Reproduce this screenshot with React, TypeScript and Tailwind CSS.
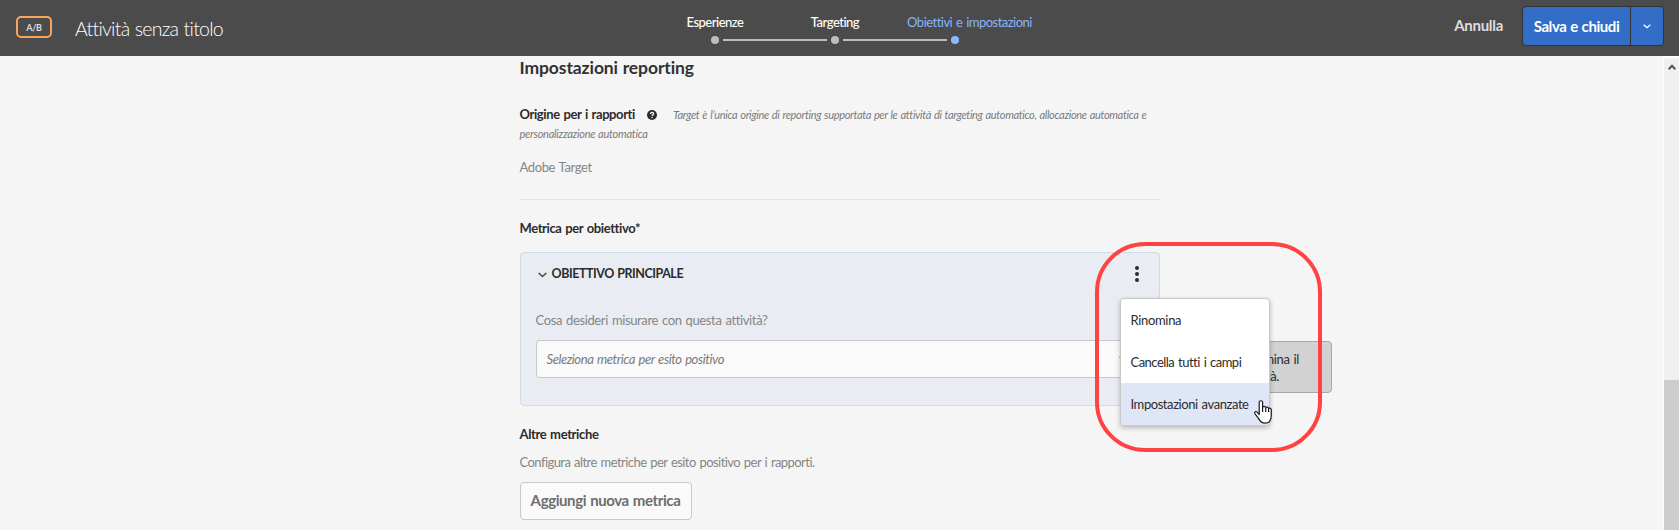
const steps = [
  { label: "Esperienze", active: false, text: "font-medium text-white tracking-[-0.5px]" },
  { label: "Targeting", active: false, text: "font-medium text-white tracking-[-0.5px]" },
  { label: "Obiettivi e impostazioni", active: true, text: "pl-[29px] text-[#86b5fb] tracking-[-0.52px] [word-spacing:1px]" },
];

function Chevron({ className }: { className: string }) {
  return (
    <svg viewBox="0 0 10 6" className={className} fill="none" stroke="currentColor" strokeWidth="1.6" strokeLinecap="round" strokeLinejoin="round">
      <path d="M1.2 1.2 5 4.6 8.8 1.2" />
    </svg>
  );
}

function HelpIcon() {
  return (
    <svg viewBox="0 0 10 10" className="size-[10px] shrink-0">
      <circle cx="5" cy="5" r="5" fill="#2c2c2c" />
      <path d="M3.5 3.9c0-2 3.1-1.9 3.1-.1 0 1.1-1.5 1.1-1.5 2.1" fill="none" stroke="#f5f5f5" strokeWidth="1.3" />
      <circle cx="5.1" cy="7.5" r="0.8" fill="#f5f5f5" />
    </svg>
  );
}

function HandCursor() {
  return (
    <svg viewBox="0 0 18 24" className="absolute left-[133px] top-[101px] h-[24px] w-[18px]" fill="#fff" stroke="#1b1b26" strokeWidth="1.2" strokeLinejoin="round">
      <path d="M5.2 14.6V2.4C5.2.2 8.6.2 8.6 2.4V7.4C8.9 5.8 11.5 5.9 11.7 7.9 12.2 6.5 14.5 6.8 14.6 8.6 15.2 7.7 17.3 8.1 17.3 10V15.2C17.3 20 15 23.2 11 23.2 7.4 23.2 6.2 21.6 4.6 18.6L.9 13.6C.2 11.9 1.8 10.8 3.2 12.1Z" />
      <path d="M8.6 7V12M11.7 8V12M14.6 8.8V12" fill="none" />
    </svg>
  );
}

function Header() {
  return (
    <header className="grid h-14 shrink-0 grid-cols-[655px_360px_1fr] bg-[#4b4b4b]">
      <div className="flex items-start pl-4 pt-4">
        <span className="flex h-[22px] w-9 items-center justify-center rounded-[5px] border-2 border-[#f8a55b] pt-px text-[9px] font-bold tracking-[-0.3px] text-[#dedede]">A/B</span>
        <h1 className="ml-[23px] mt-px text-[19.5px] font-light leading-[24px] tracking-[-0.72px] text-white [word-spacing:0.7px]">Attività senza titolo</h1>
      </div>
      <nav className="grid grid-cols-3 pt-[13px]">
        {steps.map((s, i) => (
          <div key={s.label} className="flex flex-col">
            <div className={`flex justify-center whitespace-nowrap text-[13px] leading-[19px] ${s.text}`}>{s.label}</div>
            <div className="mt-1 grid h-2 grid-cols-[1fr_8px_1fr] items-center gap-1">
              <span className={`h-0.5 ${i > 0 ? "bg-[#bdbdbd]" : ""}`} />
              <span className={`size-2 rounded-full ${s.active ? "bg-[#86b9ff]" : "bg-[#bdbdbd]"}`} />
              <span className={`h-0.5 ${i < 2 ? "bg-[#bdbdbd]" : ""}`} />
            </div>
          </div>
        ))}
      </nav>
      <div className="flex items-start justify-end pr-[15px] pt-1.5">
        <button className="mr-[19px] mt-[9px] text-[15px] font-bold leading-[20px] tracking-[-0.3px] text-[#dedede]">Annulla</button>
        <div className="flex h-10 w-[142px] divide-x divide-[#333] rounded-[4px] border border-[#333] bg-[#326ec8]">
          <button className="w-[108px] text-[15px] font-bold leading-[20px] tracking-[-0.43px] text-white [word-spacing:0.6px]">Salva e chiudi</button>
          <button className="flex flex-1 items-center justify-center pt-px text-white">
            <Chevron className="h-[5px] w-2" />
          </button>
        </div>
      </div>
    </header>
  );
}

function ActionMenu() {
  return (
    <>
      <div className="absolute left-[660px] top-[88px] flex h-[52px] w-[151px] flex-col items-end rounded-[4px] border border-[#a8a8a8] bg-[#d2d2d2] pt-[9px] text-[13px] leading-[17px] tracking-[-0.35px] text-[#2c2c2c]">
        <span className="pr-[32px] [word-spacing:1px]">Elimina il</span>
        <span className="pr-[52px]">attività.</span>
      </div>
      <div className="absolute left-[599px] top-[45px] h-[128px] w-[150px] rounded-[4px] border border-[#c8c8c8] bg-white text-[13px] leading-[42px] text-[#2c2c2c] shadow-[0_2px_5px_rgba(0,0,0,0.25)]">
        <div className="h-[42px] pl-[9.5px] tracking-[-0.33px]">Rinomina</div>
        <div className="h-[42px] pl-[9.5px] tracking-[-0.52px] [word-spacing:1px]">Cancella tutti i campi</div>
        <div className="h-[42px] rounded-b-[3px] bg-[#dfe7f6] pl-[9.5px] tracking-[-0.43px] [word-spacing:1px]">Impostazioni avanzate</div>
        <HandCursor />
      </div>
      <div className="absolute left-[574px] top-[-11px] h-[210px] w-[227px] rounded-[50px] border-4 border-[#ff4343]" />
    </>
  );
}

function GoalPanel() {
  return (
    <section className="relative mt-[14px] h-[154px] rounded-[4px] border border-[#cfdcea] bg-[#e9edf3] px-[15px]">
      <div className="flex h-[42px] items-center pl-[2px]">
        <Chevron className="mt-[2px] h-[6px] w-[9px] text-[#4b4b4b]" />
        <h3 className="ml-[4.5px] text-[12.5px] font-bold tracking-[-0.46px] text-[#2c2c2c] [word-spacing:0.8px]">OBIETTIVO PRINCIPALE</h3>
        <div className="ml-auto mr-[5px] mt-[-1px] flex flex-col gap-[2px]">
          <span className="size-1 rounded-full bg-[#2c2c2c]" />
          <span className="size-1 rounded-full bg-[#2c2c2c]" />
          <span className="size-1 rounded-full bg-[#2c2c2c]" />
        </div>
      </div>
      <p className="-ml-[0.5px] mt-[15px] text-[13px] leading-[20px] tracking-[-0.37px] text-[#858585] [word-spacing:1px]">Cosa desideri misurare con questa attività?</p>
      <div className="mt-[10px] flex h-[38px] items-center justify-between rounded-[4px] border border-[#c8c8c8] bg-[#fafafa] pl-[9.5px] pr-[14px]">
        <span className="pt-[2px] text-[13px] italic tracking-[-0.43px] text-[#7a7a7a] [word-spacing:1px]">Seleziona metrica per esito positivo</span>
        <Chevron className="h-[6px] w-[10px] text-[#707070]" />
      </div>
      <ActionMenu />
    </section>
  );
}

export default function App() {
  return (
    <div className="flex h-[530px] w-full flex-col overflow-hidden bg-[#f5f5f5] font-[Lato,'Noto_Sans',sans-serif]">
      <Header />
      <div className="flex min-h-0 flex-1">
        <main className="min-w-0 flex-1 overflow-hidden pl-[520px] pt-px">
          <div className="w-[640px]">
            <h2 className="-ml-[0.5px] text-[17.5px] font-bold leading-[22px] tracking-[-0.1px] text-[#323232] [word-spacing:0.6px]">Impostazioni reporting</h2>
            <div className="-ml-[0.5px] mt-[26px] flex h-[19px] items-center whitespace-nowrap leading-[19px]">
              <strong className="w-[127.5px] text-[13px] tracking-[-0.4px] text-[#2c2c2c] [word-spacing:1px]">Origine per i rapporti</strong>
              <HelpIcon />
              <em className="ml-[16px] text-[11px] tracking-[-0.332px] text-[#7a7a7a] [word-spacing:0.7px]">Target è l’unica origine di reporting supportata per le attività di targeting automatico, allocazione automatica e</em>
            </div>
            <em className="-ml-[0.5px] block text-[11px] leading-[19px] tracking-[-0.26px] text-[#7a7a7a] [word-spacing:0.5px]">personalizzazione automatica</em>
            <p className="-ml-[0.5px] mt-[15px] text-[13px] leading-[19px] tracking-[-0.38px] text-[#858585] [word-spacing:1px]">Adobe Target</p>
            <hr className="mt-[22px] border-[#e2e2e2]" />
            <h3 className="-ml-[0.5px] mt-[18px] text-[13px] font-bold leading-[20px] tracking-[-0.4px] text-[#2c2c2c] [word-spacing:1px]">Metrica per obiettivo*</h3>
            <GoalPanel />
            <h3 className="-ml-[0.5px] mt-[18px] text-[13px] font-bold leading-[20px] tracking-[-0.37px] text-[#2c2c2c] [word-spacing:1px]">Altre metriche</h3>
            <p className="-ml-[0.5px] mt-2 text-[13px] leading-[20px] tracking-[-0.56px] text-[#858585] [word-spacing:1px]">Configura altre metriche per esito positivo per i rapporti.</p>
            <button className="mt-[10px] h-[38px] w-[172px] rounded-[4px] border border-[#c8c8c8] bg-[#fafafa] pb-px pr-px text-[15px] font-bold tracking-[-0.4px] text-[#6e6e6e] [word-spacing:0.8px]">Aggiungi nuova metrica</button>
          </div>
        </main>
        <div className="flex w-4 flex-col items-center border-l border-t-2 border-white bg-[#f0f0f0]">
          <svg viewBox="0 0 8 6" className="mt-[6px] h-[6px] w-2" fill="none" stroke="#555" strokeWidth="2">
            <path d="M.7 5.2 4 1.7 7.3 5.2" />
          </svg>
          <div className="mt-[310px] w-full flex-1 bg-[#cdcdcd]" />
        </div>
      </div>
    </div>
  );
}
